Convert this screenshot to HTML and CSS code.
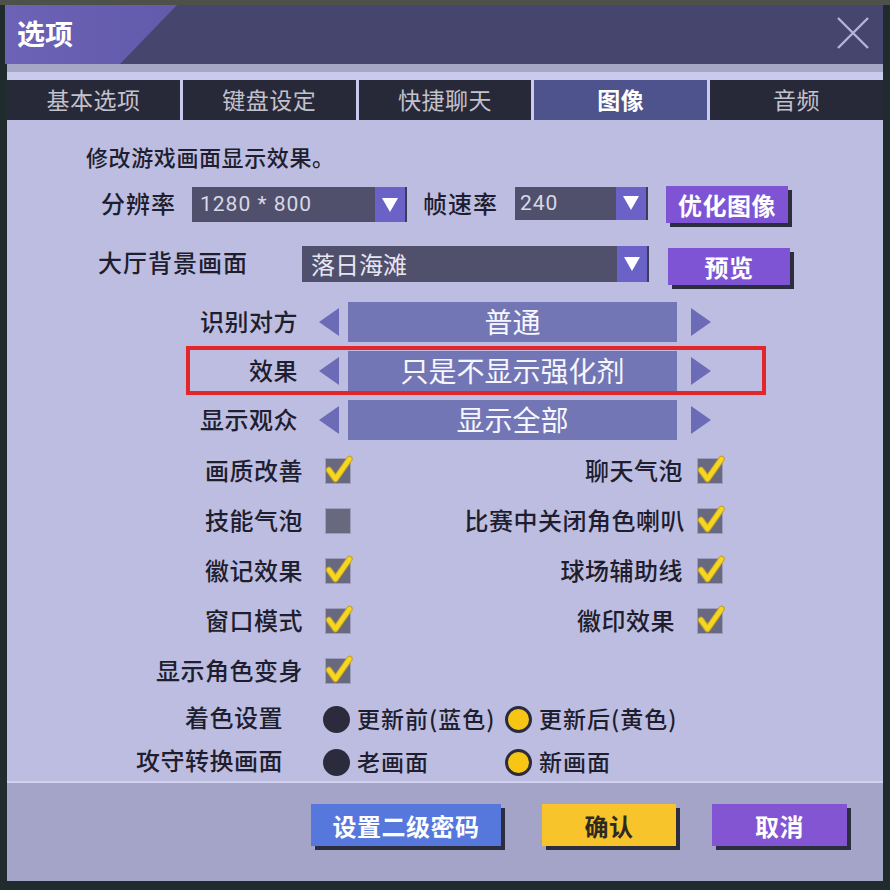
FILE: index.html
```html
<!DOCTYPE html>
<html lang="zh-CN">
<head>
<meta charset="utf-8">
<title>选项</title>
<link rel="stylesheet" href="styles.css">
</head>
<body>
<div class="dialog">
  <div class="titlebar">
    <div class="title-tab"><span class="title">选项</span></div>
    <svg class="close" viewBox="0 0 34 34" width="34" height="34"><path d="M2 2 L32 32 M32 2 L2 32" stroke="#b3b3dc" stroke-width="2.4" fill="none"/></svg>
  </div>
  <div class="tabs">
    <div class="tab">基本选项</div>
    <div class="tab">键盘设定</div>
    <div class="tab">快捷聊天</div>
    <div class="tab active">图像</div>
    <div class="tab">音频</div>
  </div>
  <div class="content">
    <p class="desc">修改游戏画面显示效果。</p>

    <div class="form-row row1">
      <span class="lbl lbl-res">分辨率</span>
      <div class="select sel-res"><span class="sel-text num">1280 * 800</span><span class="sel-arrow"><svg viewBox="0 0 16 14" width="16" height="14"><path d="M0 0 H16 L8 14 Z" fill="#fff"/></svg></span></div>
      <span class="lbl lbl-fps">帧速率</span>
      <div class="select sel-fps"><span class="sel-text num">240</span><span class="sel-arrow"><svg viewBox="0 0 16 14" width="16" height="14"><path d="M0 0 H16 L8 14 Z" fill="#fff"/></svg></span></div>
      <button class="btn btn-violet btn-opt">优化图像</button>
    </div>

    <div class="form-row row2">
      <span class="lbl lbl-bg">大厅背景画面</span>
      <div class="select sel-bg"><span class="sel-text">落日海滩</span><span class="sel-arrow"><svg viewBox="0 0 16 14" width="16" height="14"><path d="M0 0 H16 L8 14 Z" fill="#fff"/></svg></span></div>
      <button class="btn btn-violet btn-prev">预览</button>
    </div>

    <div class="spinners">
      <div class="spin">
        <span class="spin-lbl">识别对方</span>
        <svg class="tri tri-l" viewBox="0 0 20 28" width="20" height="28"><path d="M20 0 V28 L0 14 Z"/></svg>
        <div class="spin-val">普通</div>
        <svg class="tri tri-r" viewBox="0 0 20 28" width="20" height="28"><path d="M0 0 V28 L20 14 Z"/></svg>
      </div>
      <div class="spin highlight">
        <span class="spin-lbl">效果</span>
        <svg class="tri tri-l" viewBox="0 0 20 28" width="20" height="28"><path d="M20 0 V28 L0 14 Z"/></svg>
        <div class="spin-val">只是不显示强化剂</div>
        <svg class="tri tri-r" viewBox="0 0 20 28" width="20" height="28"><path d="M0 0 V28 L20 14 Z"/></svg>
      </div>
      <div class="spin">
        <span class="spin-lbl">显示观众</span>
        <svg class="tri tri-l" viewBox="0 0 20 28" width="20" height="28"><path d="M20 0 V28 L0 14 Z"/></svg>
        <div class="spin-val">显示全部</div>
        <svg class="tri tri-r" viewBox="0 0 20 28" width="20" height="28"><path d="M0 0 V28 L20 14 Z"/></svg>
      </div>
    </div>

    <div class="checks">
      <div class="chk left"><span>画质改善</span><span class="cb"><svg viewBox="0 0 24 24" width="24" height="24"><path class="ck-o" d="M3 11 L9.5 20 L23.5 0"/><path class="ck" d="M3 11 L9.5 20 L23.5 0"/></svg></span></div>
      <div class="chk right"><span>聊天气泡</span><span class="cb"><svg viewBox="0 0 24 24" width="24" height="24"><path class="ck-o" d="M3 11 L9.5 20 L23.5 0"/><path class="ck" d="M3 11 L9.5 20 L23.5 0"/></svg></span></div>

      <div class="chk left"><span>技能气泡</span><span class="cb"></span></div>
      <div class="chk right tight"><span>比赛中关闭角色喇叭</span><span class="cb"><svg viewBox="0 0 24 24" width="24" height="24"><path class="ck-o" d="M3 11 L9.5 20 L23.5 0"/><path class="ck" d="M3 11 L9.5 20 L23.5 0"/></svg></span></div>

      <div class="chk left"><span>徽记效果</span><span class="cb"><svg viewBox="0 0 24 24" width="24" height="24"><path class="ck-o" d="M3 11 L9.5 20 L23.5 0"/><path class="ck" d="M3 11 L9.5 20 L23.5 0"/></svg></span></div>
      <div class="chk right"><span>球场辅助线</span><span class="cb"><svg viewBox="0 0 24 24" width="24" height="24"><path class="ck-o" d="M3 11 L9.5 20 L23.5 0"/><path class="ck" d="M3 11 L9.5 20 L23.5 0"/></svg></span></div>

      <div class="chk left"><span>窗口模式</span><span class="cb"><svg viewBox="0 0 24 24" width="24" height="24"><path class="ck-o" d="M3 11 L9.5 20 L23.5 0"/><path class="ck" d="M3 11 L9.5 20 L23.5 0"/></svg></span></div>
      <div class="chk right wide"><span>徽印效果</span><span class="cb"><svg viewBox="0 0 24 24" width="24" height="24"><path class="ck-o" d="M3 11 L9.5 20 L23.5 0"/><path class="ck" d="M3 11 L9.5 20 L23.5 0"/></svg></span></div>

      <div class="chk left"><span>显示角色变身</span><span class="cb"><svg viewBox="0 0 24 24" width="24" height="24"><path class="ck-o" d="M3 11 L9.5 20 L23.5 0"/><path class="ck" d="M3 11 L9.5 20 L23.5 0"/></svg></span></div>
    </div>

    <div class="radios">
      <span class="r-lbl">着色设置</span>
      <span class="opt"><span class="radio"></span>更新前(蓝色)</span>
      <span class="opt"><span class="radio on"></span>更新后(黄色)</span>
      <span class="r-lbl">攻守转换画面</span>
      <span class="opt"><span class="radio"></span>老画面</span>
      <span class="opt"><span class="radio on"></span>新画面</span>
    </div>
  </div>
  <div class="footer">
    <button class="btn btn-blue">设置二级密码</button>
    <button class="btn btn-yellow">确认</button>
    <button class="btn btn-purple">取消</button>
  </div>
</div>
</body>
</html>
```

FILE: styles.css
```css
html, body {
  margin: 0;
  padding: 0;
}
body {
  width: 890px;
  height: 890px;
  overflow: hidden;
  background: linear-gradient(to bottom, #4d5149 0, #4d5149 5px, #1f2b2c 5px);
  font-family: "Noto Sans CJK SC", "Noto Sans", sans-serif;
  color: #1e1e2e;
}
.dialog {
  margin: 5px 0 0 5px;
  width: 878px;
  height: 876px;
  display: flex;
  flex-direction: column;
}

/* title bar */
.titlebar {
  height: 59px;
  background: #46456e;
  display: flex;
  align-items: flex-start;
  justify-content: space-between;
}
.title-tab {
  width: 172px;
  height: 59px;
  background: linear-gradient(to right, #6c62b6, #625aab);
  clip-path: polygon(0 0, 100% 0, 115px 100%, 0 100%);
  display: flex;
  align-items: center;
}
.title {
  padding-left: 12px;
  color: #fff;
  font-weight: 700;
  font-size: 28px;
  line-height: 1;
  margin-top: -4px;
}
.close {
  margin: 11px 13px 0 0;
  display: block;
}

/* tabs */
.tabs {
  margin-left: 2px;
  border-top: 8px solid #a6a6c6;
  padding-top: 8px;
  background: #cacaee;
  display: flex;
  gap: 3px;
}
.tab {
  flex: 1;
  height: 40px;
  background: #282938;
  color: #c2c2cc;
  font-size: 23px;
  line-height: 38px;
  text-align: center;
  letter-spacing: 0.5px;
}
.tab.active {
  background: #4e538e;
  color: #fff;
  font-weight: 700;
}

/* content */
.content {
  margin-left: 2px;
  height: 663px;
  background: #bdbde1;
  border-bottom: 2px solid #d2d2f0;
  box-sizing: border-box;
}
.desc {
  margin: 0;
  padding: 21px 0 0 79px;
  font-size: 22px;
  line-height: 30px;
  letter-spacing: 0.6px;
  font-weight: 500;
}
.form-row {
  display: flex;
  align-items: center;
}
.row1 {
  margin-top: 15px;
  height: 37px;
  padding-left: 94px;
}
.row2 {
  margin-top: 22px;
  height: 38px;
  padding-left: 91px;
}
.lbl {
  font-size: 24px;
  letter-spacing: 1px;
  font-weight: 500;
  line-height: 30px;
}
.lbl-res { width: 91px; margin-top: -4px; }
.lbl-fps { width: 92px; margin-left: 16px; margin-top: -4px; }
.lbl-bg { width: 204px; margin-top: -4px; }

.select {
  height: 35px;
  background: #50506d;
  display: flex;
  justify-content: space-between;
  box-sizing: border-box;
  border-right: 2px solid #3c3c58;
}
.sel-res { width: 215px; }
.sel-fps { width: 133px; height: 33px; margin-top: -3px; }
.sel-bg { width: 347px; height: 36px; }
.sel-text {
  color: #e6e6f2;
  padding-left: 9px;
  font-size: 24px;
  line-height: 36px;
}
.sel-text.num {
  font-family: Roboto, "Noto Sans", sans-serif;
  font-size: 21px;
  letter-spacing: 1px;
  line-height: 35px;
  padding-left: 8px;
  color: #d8d8e6;
}
.sel-fps .sel-text.num { line-height: 33px; padding-left: 5px; }
.sel-arrow {
  width: 30px;
  background: #6b62c8;
  display: flex;
  align-items: center;
  justify-content: center;
}

.btn {
  border: none;
  padding: 0;
  font-family: "Noto Sans CJK SC", "Noto Sans", sans-serif;
  font-weight: 700;
  font-size: 24px;
  color: #fff;
  box-shadow: 4px 4px 0 #2d2d40;
  letter-spacing: 0.5px;
}
.btn-violet {
  background: #7e54d4;
  width: 122px;
  height: 37px;
}
.btn-opt { margin-left: 18px; }
.btn-prev { margin-left: 19px; margin-top: 4px; }

/* spinners */
.spinners {
  margin-top: 14px;
  margin-left: 179px;
  width: 580px;
}
.spin {
  height: 49px;
  box-sizing: border-box;
  border: 4px solid transparent;
  display: flex;
  align-items: center;
}
.spin.highlight {
  border-color: #e3262b;
}
.spin-lbl {
  width: 108px;
  text-align: right;
  font-size: 24px;
  font-weight: 500;
  letter-spacing: 0.5px;
  margin-top: -3px;
}
.tri {
  display: block;
  fill: #6c6bb8;
}
.tri-l { margin-left: 21px; }
.tri-r { margin-left: 14px; }
.spin-val {
  margin-left: 9px;
  width: 329px;
  height: 40px;
  background: #7376b4;
  color: #f6f6ff;
  font-size: 28px;
  line-height: 38px;
  text-align: center;
}

/* checkboxes */
.checks {
  margin-top: 2px;
  display: grid;
  grid-template-columns: 343px 372px;
  grid-auto-rows: 50px;
}
.chk {
  display: flex;
  justify-content: flex-end;
  align-items: center;
  font-size: 24px;
  font-weight: 500;
  letter-spacing: 0.5px;
}
.chk > span:first-child { margin-top: -3px; }
.chk.left { gap: 23px; }
.chk.right { gap: 15px; }
.chk.right.tight { gap: 13px; }
.chk.right.wide { gap: 23px; }
.cb {
  width: 24px;
  height: 24px;
  background: #68687e;
  box-shadow: 0 0 0 1px #9c9cbc;
  display: block;
  flex: none;
}
.cb svg {
  display: block;
  overflow: visible;
}
.ck-o {
  fill: none;
  stroke: #c4a22a;
  stroke-width: 6.5;
  stroke-linejoin: round;
  stroke-linecap: round;
}
.ck {
  fill: none;
  stroke: #f6d620;
  stroke-width: 4.5;
  stroke-linejoin: round;
  stroke-linecap: round;
}

/* radios */
.radios {
  display: grid;
  grid-template-columns: 316px 182px 200px;
  grid-template-rows: 44px 42px;
  align-items: center;
}
.r-lbl {
  text-align: right;
  padding-right: 40px;
  font-size: 24px;
  font-weight: 500;
  letter-spacing: 0.5px;
  margin-top: -3px;
}
.opt {
  display: flex;
  align-items: center;
  gap: 7px;
  font-size: 23px;
  font-weight: 500;
  letter-spacing: 1px;
  white-space: nowrap;
  line-height: 30px;
}
.radio {
  width: 27px;
  height: 27px;
  border-radius: 50%;
  background: #2b2b3d;
  box-sizing: border-box;
  flex: none;
  margin-top: 3px;
}
.radio.on {
  background: #f7c614;
  border: 3px solid #2b2b3d;
}

/* footer */
.footer {
  margin-left: 2px;
  flex: 1;
  background: #a4a4c8;
  display: flex;
  align-items: flex-start;
  padding: 21px 0 0 304px;
}
.footer .btn { height: 42px; }
.btn-blue { width: 190px; background: #5677dc; }
.btn-yellow { width: 134px; background: #f8c42b; color: #2e2a22; margin-left: 41px; }
.btn-purple { width: 135px; background: #8455d2; margin-left: 36px; }
```
